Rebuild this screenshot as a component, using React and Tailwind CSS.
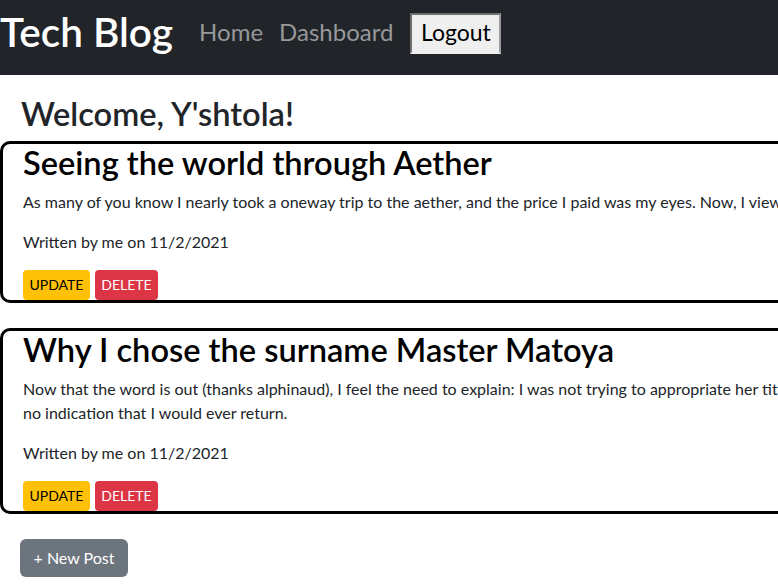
import React from 'react';

const posts = [
  {
    id: 1,
    title: 'Seeing the world through Aether',
    lines: [
      'As many of you know I nearly took a oneway trip to the aether, and the price I paid was my eyes. Now, I view the world through the aether itself, and it is a sight more wondrous than you might think.',
    ],
    date: '11/2/2021',
  },
  {
    id: 2,
    title: 'Why I chose the surname Master Matoya',
    lines: [
      'Now that the word is out (thanks alphinaud), I feel the need to explain: I was not trying to appropriate her title, I simply took it up after she had left us with',
      'no indication that I would ever return.',
    ],
    date: '11/2/2021',
  },
];

const PostCard = ({ post }) => (
  <div className="w-[1200px] rounded-[10px] border-[3px] border-black pl-[20px]">
    <h2 className="mb-[8px] text-[32.6px] font-semibold leading-[38px] text-black">{post.title}</h2>
    <p className="mb-4 whitespace-nowrap text-[16px] leading-[24px]">
      {post.lines.map((line, i) => (
        <span key={i} className="block">
          {line}
        </span>
      ))}
    </p>
    <p className="mb-4 text-[16px] leading-[24px]">Written by me on {post.date}</p>
    <div className="flex gap-[5px]">
      <button className="h-[30px] w-[67px] rounded-[4px] bg-[#ffc107] text-[14px] leading-[20px] text-black">
        UPDATE
      </button>
      <button className="h-[30px] w-[63px] rounded-[4px] bg-[#dc3545] text-[14px] leading-[20px] text-white">
        DELETE
      </button>
    </div>
  </div>
);

const App = () => {
  return (
    <div className="min-h-screen w-full overflow-hidden bg-white font-['Lato',sans-serif] text-[#212529]">
      <nav className="flex h-[75px] items-start bg-[#212529]">
        <h1 className="mt-[8px] text-[40.5px] font-semibold leading-[48px] text-white">Tech Blog</h1>
        <a href="#" className="ml-[26px] mt-[20px] text-[24px] leading-[24px] text-[#96989b]">
          Home
        </a>
        <a href="#" className="ml-[16px] mt-[20px] text-[24px] leading-[24px] text-[#96989b]">
          Dashboard
        </a>
        <button className="ml-[17px] mt-[13px] h-[41px] w-[91px] border-2 border-b-[#efefef] border-l-[#6f6f6f] border-r-[#9a9a9a] border-t-[#6f6f6f] bg-[#efefef] pb-[4px] text-[23px] leading-[24px] text-black">
          Logout
        </button>
      </nav>

      <main className="pt-[19px]">
        <h1 className="mb-[7px] pl-[21px] text-[32.6px] font-semibold leading-[40px]">Welcome, Y'shtola!</h1>
        <div className="flex flex-col gap-[25px]">
          {posts.map((post) => (
            <PostCard key={post.id} post={post} />
          ))}
        </div>
        <button className="ml-[20px] mt-[25px] h-[38px] w-[108px] rounded-[6px] bg-[#6c757d] text-[16px] leading-[24px] text-white">
          + New Post
        </button>
      </main>
    </div>
  );
};

export default App;
